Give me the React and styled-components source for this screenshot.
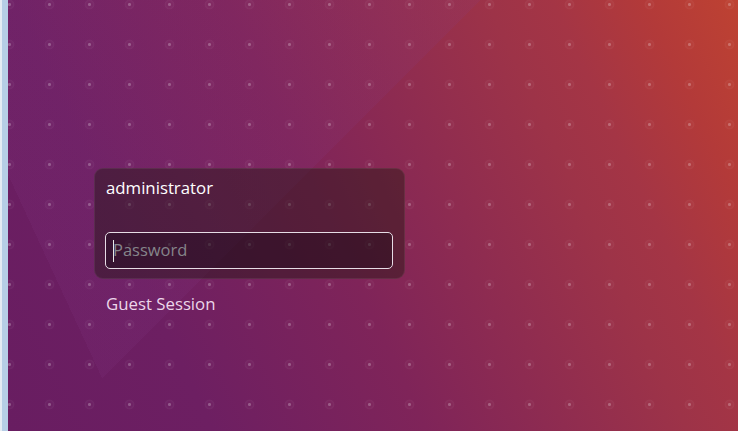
import React from "react";
import styled, { createGlobalStyle } from "styled-components";

const GlobalStyle = createGlobalStyle`
  html, body {
    margin: 0;
    padding: 0;
    height: 100%;
    overflow: hidden;
  }
  body {
    font-family: "Open Sans", "Noto Sans", "DejaVu Sans", sans-serif;
  }
  #root {
    height: 100%;
  }
`;

const Screen = styled.div`
  display: flex;
  width: 100vw;
  height: 100vh;
`;

const EdgeStrip = styled.div`
  flex: 0 0 8px;
  box-sizing: border-box;
  border-left: 2px solid #e4ebf3;
  background: #b6cee6;
`;

const Wallpaper = styled.main`
  flex: 1;
  display: flex;
  flex-direction: column;
  align-items: flex-start;
  padding: 168px 0 0 86px;
  box-sizing: border-box;
  background-color: #7e2459;
  background-image:
    radial-gradient(
      circle at 20.5px 20.5px,
      rgba(255, 255, 255, 0.26) 0 1.2px,
      rgba(255, 255, 255, 0.02) 1.8px 3.3px,
      rgba(255, 255, 255, 0.045) 3.8px 4.6px,
      transparent 5.2px
    ),
    conic-gradient(
      from -24.8deg at 94px 378px,
      rgba(135, 60, 140, 0.13) 0deg 69.8deg,
      transparent 69.8deg
    ),
    linear-gradient(
      65deg,
      #681d61 0%,
      #6d1f62 22%,
      #7f2459 45%,
      #9d3348 73%,
      #a43545 80%,
      #b33a39 90%,
      #be4232 100%
    );
  background-size: 40px 40px, 100% 100%, 100% 100%;
  background-position: -19px -16px, 0 0, 0 0;
  background-repeat: repeat, no-repeat, no-repeat;
`;

const Greeter = styled.section`
  display: flex;
  flex-direction: column;
  align-items: flex-start;
`;

const LoginCard = styled.div`
  box-sizing: border-box;
  width: 311px;
  height: 111px;
  padding: 9px 11px 9px 10px;
  border: 1px solid rgba(255, 255, 255, 0.07);
  border-radius: 9px;
  background: rgba(22, 22, 5, 0.38);
  display: flex;
  flex-direction: column;
`;

const UserName = styled.div`
  padding-left: 1px;
  font-size: 16.8px;
  line-height: 20px;
  color: #ffffff;
`;

const PasswordField = styled.div`
  margin-top: 34px;
  box-sizing: border-box;
  width: 288px;
  height: 37px;
  padding-left: 7px;
  border: 1px solid #e6dce5;
  border-radius: 5px;
  background: rgba(5, 0, 10, 0.28);
  display: flex;
  align-items: center;
`;

const Caret = styled.span`
  display: inline-block;
  width: 1px;
  height: 22px;
  margin-right: -1px;
  background: #e8e8e8;
  flex: 0 0 auto;
`;

const Placeholder = styled.span`
  font-size: 16.5px;
  line-height: 20px;
  margin-top: -1px;
  color: #85848a;
`;

const SessionItem = styled.div`
  margin-top: 15px;
  padding-left: 12px;
  font-size: 16.8px;
  line-height: 20px;
  color: rgba(255, 240, 255, 0.88);
`;

export default function App() {
  return (
    <>
      <GlobalStyle />
      <Screen>
        <EdgeStrip />
        <Wallpaper>
          <Greeter>
            <LoginCard>
              <UserName>administrator</UserName>
              <PasswordField>
                <Caret />
                <Placeholder>Password</Placeholder>
              </PasswordField>
            </LoginCard>
            <SessionItem>Guest Session</SessionItem>
          </Greeter>
        </Wallpaper>
      </Screen>
    </>
  );
}
